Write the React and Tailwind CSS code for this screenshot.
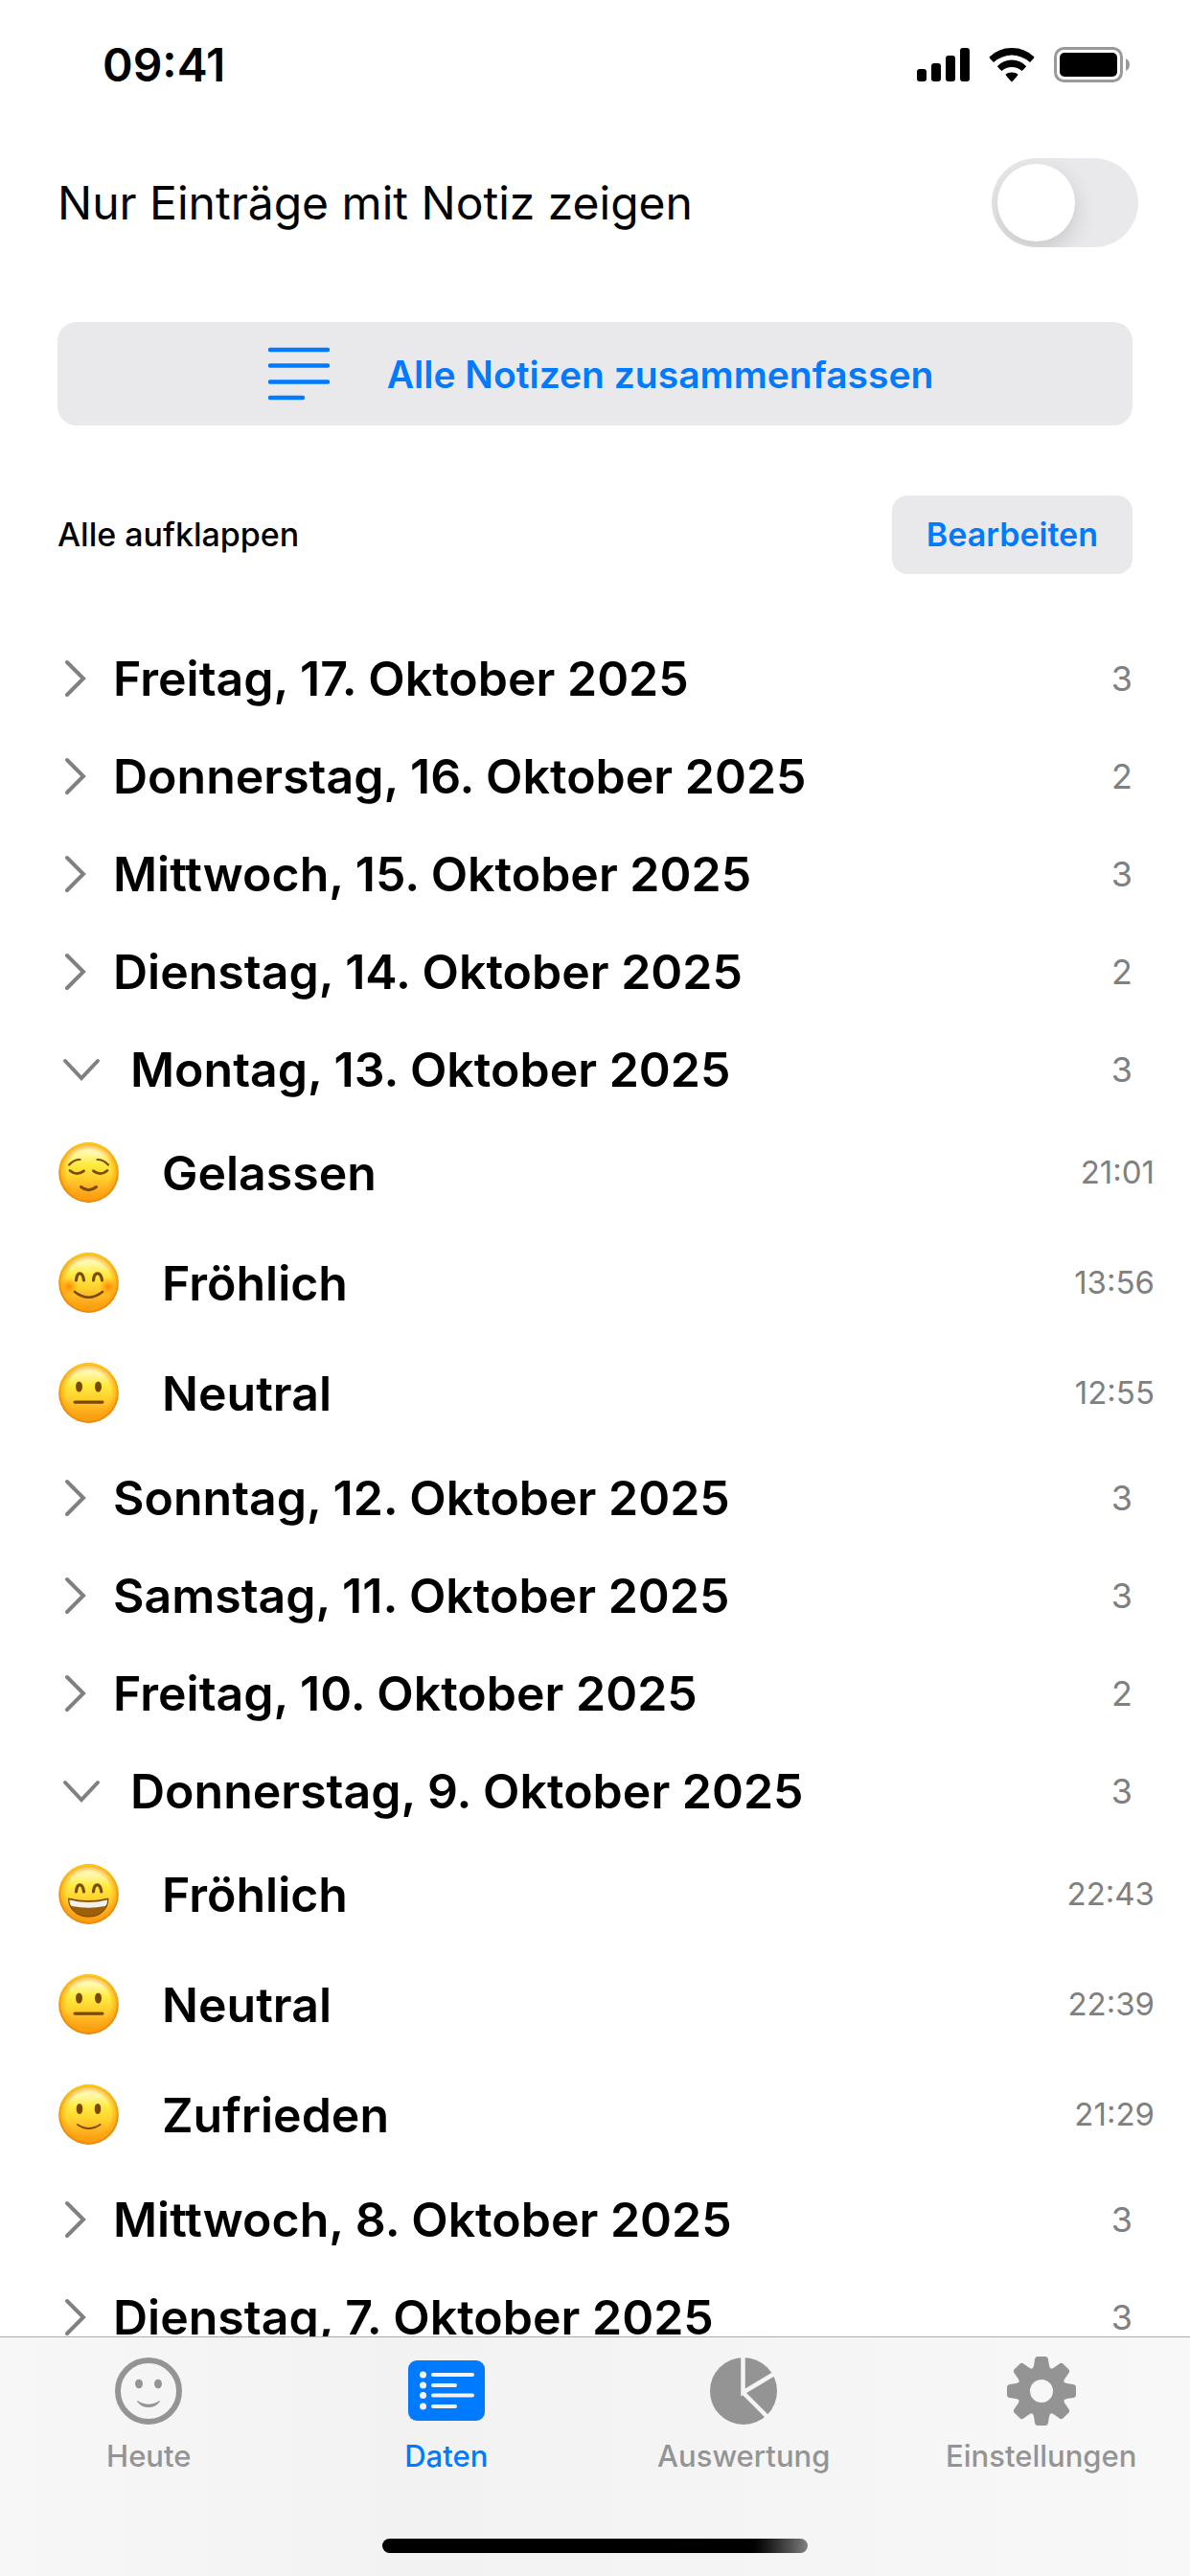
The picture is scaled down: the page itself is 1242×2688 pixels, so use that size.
/**
 * Mood journal, "Daten" tab.
 *
 * Shows all recorded days as collapsible groups. An opened day lists its
 * mood entries with their time. The tab bar stays fixed at the bottom while
 * the list scrolls behind it.
 */

import { useState } from 'react';

const INITIAL_DAYS = [
  { label: 'Freitag, 17. Oktober 2025', count: 3 },
  { label: 'Donnerstag, 16. Oktober 2025', count: 2 },
  { label: 'Mittwoch, 15. Oktober 2025', count: 3 },
  { label: 'Dienstag, 14. Oktober 2025', count: 2 },
  {
    label: 'Montag, 13. Oktober 2025',
    count: 3,
    open: true,
    entries: [
      { mood: 'relieved', name: 'Gelassen', time: '21:01' },
      { mood: 'blush', name: 'Fröhlich', time: '13:56' },
      { mood: 'neutral', name: 'Neutral', time: '12:55' },
    ],
  },
  { label: 'Sonntag, 12. Oktober 2025', count: 3 },
  { label: 'Samstag, 11. Oktober 2025', count: 3 },
  { label: 'Freitag, 10. Oktober 2025', count: 2 },
  {
    label: 'Donnerstag, 9. Oktober 2025',
    count: 3,
    open: true,
    entries: [
      { mood: 'grin', name: 'Fröhlich', time: '22:43' },
      { mood: 'neutral', name: 'Neutral', time: '22:39' },
      { mood: 'smile', name: 'Zufrieden', time: '21:29' },
    ],
  },
  { label: 'Mittwoch, 8. Oktober 2025', count: 3 },
  { label: 'Dienstag, 7. Oktober 2025', count: 3 },
];

// Facial features, drawn on top of the shared yellow face (63x63)
const FEATURES = {
  relieved: (
    <g fill="none" stroke="#7a4a05" strokeLinecap="round">
      <path d="M11 23.500Q16 18 22.500 18M40.500 18Q47 18 52 23.500" strokeWidth="2.200" />
      <path d="M12 29.500Q19 35.500 26.500 29.800M36.500 29.800Q44 35.500 51 29.500" strokeWidth="2.800" />
      <path d="M23.500 46.500Q31.500 53 39.500 46.500" strokeWidth="3" />
    </g>
  ),
  blush: (
    <g>
      <circle cx="11" cy="35.500" r="10" fill="url(#cheek)" />
      <circle cx="52" cy="35.500" r="10" fill="url(#cheek)" />
      <g fill="none" stroke="#7a4a05" strokeLinecap="round">
        <path d="M18.500 29Q19 21.800 22.300 21.800T26.500 29M36.500 29Q37 21.800 40.800 21.800T45.500 29" strokeWidth="3.200" />
        <path d="M17 41Q31.500 52.500 46 41" strokeWidth="2.600" />
      </g>
    </g>
  ),
  neutral: (
    <g fill="#7a4a05">
      <ellipse cx="21.500" cy="25" rx="3.500" ry="5.500" />
      <ellipse cx="41.500" cy="25" rx="3.500" ry="5.500" />
      <rect x="15.500" y="39.500" width="32" height="3.200" rx="1.600" />
    </g>
  ),
  grin: (
    <g>
      <path
        d="M18.500 29Q19 21.800 22.300 21.800T26.500 29M36.500 29Q37 21.800 40.500 21.800T44.800 29"
        fill="none"
        stroke="#7a4a05"
        strokeWidth="3.200"
        strokeLinecap="round"
      />
      <path d="M10.500 36Q31.500 41.500 52 36C52 48 43 55 31.500 55S10.500 48 10.500 36Z" fill="#9c6007" stroke="#704204" />
      <path d="M11.500 37.500Q31.500 42.500 51 37.500Q51 43 48.500 44Q31.500 47.500 14 44Q11.500 43 11.500 37.500Z" fill="#f1f1f1" />
    </g>
  ),
  smile: (
    <g fill="#7a4a05">
      <ellipse cx="22" cy="25.500" rx="3.300" ry="5.500" />
      <ellipse cx="41" cy="25.500" rx="3.300" ry="5.500" />
      <path d="M20 42Q31.500 50 43.500 42" fill="none" stroke="#7a4a05" strokeWidth="2" strokeLinecap="round" />
    </g>
  ),
};

/** Gradients shared by all mood faces. */
const MoodGradients = () => (
  <svg className="absolute size-0" aria-hidden="true">
    <defs>
      <linearGradient id="face" x1="0" y1="0" x2="0" y2="1">
        <stop offset="0" stopColor="#fffbd2" />
        <stop offset="0.180" stopColor="#fff8a8" />
        <stop offset="0.360" stopColor="#ffec40" />
        <stop offset="0.580" stopColor="#ffd22e" />
        <stop offset="0.780" stopColor="#ffb01e" />
        <stop offset="1" stopColor="#f7940c" />
      </linearGradient>
      <radialGradient id="rim">
        <stop offset="0.740" stopColor="#ff9d0a" stopOpacity="0" />
        <stop offset="0.900" stopColor="#ffa30f" stopOpacity="0.600" />
        <stop offset="1" stopColor="#e07c08" />
      </radialGradient>
      <linearGradient id="gloss" x1="0" y1="0" x2="0" y2="1">
        <stop offset="0" stopColor="#ffce00" />
        <stop offset="0.600" stopColor="#ffce00" stopOpacity="0" />
      </linearGradient>
      <radialGradient id="cheek">
        <stop offset="0" stopColor="#ff7a00" stopOpacity="0.850" />
        <stop offset="1" stopColor="#ff9500" stopOpacity="0" />
      </radialGradient>
    </defs>
  </svg>
);

const MoodFace = ({ mood }) => (
  <svg viewBox="0 0 63 63" className="size-[63px] shrink-0" aria-hidden="true">
    <circle cx="31.500" cy="31.500" r="31.200" fill="url(#face)" />
    <circle cx="31.500" cy="31.500" r="31.200" fill="url(#rim)" />
    <circle cx="31.500" cy="31.500" r="30.400" fill="none" stroke="url(#gloss)" strokeWidth="1.600" />
    {FEATURES[mood]}
  </svg>
);

const Chevron = ({ open }) =>
  open ? (
    <svg viewBox="0 0 40 24" className="mr-[31px] ml-[5px] h-6 w-10 shrink-0" aria-hidden="true">
      <path d="M3 3L20 21L37 3" fill="none" stroke="#808080" strokeWidth="4" strokeLinecap="round" />
    </svg>
  ) : (
    <svg viewBox="0 0 24 40" className="mr-[27px] ml-[7px] h-10 w-6 shrink-0" aria-hidden="true">
      <path d="M3 3L20 20L3 37" fill="none" stroke="#808080" strokeWidth="4" strokeLinecap="round" />
    </svg>
  );

const StatusBar = () => (
  <div className="flex h-[136px] items-center justify-between pr-[63px] pl-[107px]">
    <span className="text-[48px] leading-none font-semibold">09:41</span>
    <div className="flex items-center gap-[20px]">
      <svg viewBox="0 0 55 36" className="h-9 w-[55px]" aria-hidden="true">
        <rect x="0" y="22" width="10" height="13" rx="3" />
        <rect x="15" y="16" width="10" height="19" rx="3" />
        <rect x="30" y="8" width="10" height="27" rx="3" />
        <rect x="45" y="0" width="10" height="35" rx="3" />
      </svg>
      <svg viewBox="0 0 48 36" className="h-9 w-12" aria-hidden="true">
        <path d="M0.500 9.500Q10 0 24 0T47.500 9.500Q47.500 10.500 43 15Q34 7.500 24 7.500T5 15Q0.500 10.500 0.500 9.500Z" />
        <path d="M9 19Q15 12.500 24 12.500T39 19Q39 20 34.500 24Q30 20 24 20T13.500 24Q9 20 9 19Z" />
        <path d="M17.500 27.500Q20 25.500 24 25.500T30.500 27.500Q30.500 29 24 35.500Q17.500 29 17.500 27.500Z" />
      </svg>
      <svg viewBox="0 0 79 38" className="h-[38px] w-[79px]" aria-hidden="true">
        <rect x="1.500" y="1.500" width="69" height="34" rx="9" fill="none" stroke="#999" strokeWidth="3" />
        <rect x="6" y="6" width="60" height="25" rx="5" />
        <path d="M75 12Q79 14 79 18.500T75 25Z" fill="#999" />
      </svg>
    </div>
  </div>
);

const DayGroup = ({ day, onToggle }) => (
  <section>
    <button
      type="button"
      aria-expanded={Boolean(day.open)}
      onClick={onToggle}
      className="flex h-[102px] w-full items-center px-[60px] text-left"
    >
      <Chevron open={day.open} />
      <span className="grow text-[50px] leading-none font-semibold">{day.label}</span>
      <span className="text-[36px] leading-none text-[#808080]">{day.count}</span>
    </button>

    {day.open && day.entries && (
      <ul>
        {day.entries.map((entry) => (
          <li key={entry.time} className="flex h-[115px] items-center pr-[37px] pb-[2px] pl-[61px]">
            <MoodFace mood={entry.mood} />
            <span className="ml-[45px] grow text-[50px] leading-none font-semibold">{entry.name}</span>
            <time className="text-[33px] leading-none text-[#808080]">{entry.time}</time>
          </li>
        ))}
      </ul>
    )}
  </section>
);

const TodayIcon = () => (
  <svg viewBox="0 0 72 72" className="size-[72px]" fill="currentColor" aria-hidden="true">
    <circle cx="36" cy="36" r="32" fill="none" stroke="currentColor" strokeWidth="6" />
    <ellipse cx="26" cy="28.500" rx="4" ry="4.800" />
    <ellipse cx="46" cy="28.500" rx="4" ry="4.800" />
    <path d="M24.500 46Q36 53.500 47.500 46Q48.500 46 47.500 47.500Q43 53 36 53T24.500 47.500Q23.500 46 24.500 46Z" />
  </svg>
);

const DataIcon = () => (
  <svg viewBox="0 0 80 72" className="h-[72px] w-[80px]" aria-hidden="true">
    <rect x="0" y="4" width="80" height="63" rx="9" fill="currentColor" />
    <g fill="#f3f3f3">
      <circle cx="15.500" cy="19" r="3.500" />
      <circle cx="15.500" cy="30" r="3.500" />
      <circle cx="15.500" cy="40.500" r="3.500" />
      <circle cx="15.500" cy="52" r="3.500" />
      <rect x="24" y="17" width="45" height="4" rx="2" />
      <rect x="24" y="28" width="27" height="4" rx="2" />
      <rect x="24" y="38.500" width="45" height="4" rx="2" />
      <rect x="24" y="50" width="27" height="4" rx="2" />
    </g>
  </svg>
);

const ChartIcon = () => (
  <svg viewBox="0 0 72 72" className="size-[72px]" aria-hidden="true">
    <mask id="slices">
      <rect width="72" height="72" fill="#fff" />
      <path d="M35.500 0V37.500L68 18M35.500 37.500L62 64" fill="none" stroke="#000" strokeWidth="4.500" />
    </mask>
    <circle cx="36" cy="36" r="35" fill="currentColor" mask="url(#slices)" />
  </svg>
);

const GearIcon = () => (
  <svg viewBox="0 0 72 72" className="size-[72px]" aria-hidden="true">
    <circle cx="36" cy="36" r="18.500" fill="none" stroke="currentColor" strokeWidth="13" />
    {[0, 45, 90, 135, 180, 225, 270, 315].map((angle) => (
      <path
        key={angle}
        d="M25 14Q27.500 12.500 28 9.500L29 3Q29.500 0 32 0H40Q42.500 0 43 3L44 9.500Q44.500 12.500 47 14L43 19H29Z"
        transform={`rotate(${angle} 36 36)`}
        fill="currentColor"
      />
    ))}
  </svg>
);

const TABS = [
  { label: 'Heute', Icon: TodayIcon },
  { label: 'Daten', Icon: DataIcon },
  { label: 'Auswertung', Icon: ChartIcon },
  { label: 'Einstellungen', Icon: GearIcon },
];

const TabBar = ({ active, onSelect }) => (
  <footer className="shrink-0 border-t border-[#adadad] bg-linear-to-r from-[#f6f7f6] via-[#f2f2f2] via-35% to-[#f8f8f8]">
    <nav className="grid grid-cols-4">
      {TABS.map(({ label, Icon }) => (
        <button
          key={label}
          type="button"
          onClick={() => onSelect(label)}
          className={`flex flex-col items-center gap-[14px] pt-[20px] ${
            active === label ? 'text-[#007aff]' : 'text-[#949494]'
          }`}
        >
          <Icon />
          <span className="text-[31px] leading-[36px] font-medium">{label}</span>
        </button>
      ))}
    </nav>
    {/* Home indicator */}
    <div className="mx-auto mt-[68px] mb-[24px] h-[15px] w-[444px] rounded-full bg-linear-to-r from-black from-85% to-[#808080]" />
  </footer>
);

const App = () => {
  const [days, setDays] = useState(INITIAL_DAYS);
  const [onlyNotes, setOnlyNotes] = useState(false);
  const [activeTab, setActiveTab] = useState('Daten');

  const toggleDay = (label) => {
    setDays(days.map((day) => (day.label === label ? { ...day, open: !day.open } : day)));
  };

  const expandAll = () => {
    setDays(days.map((day) => ({ ...day, open: true })));
  };

  return (
    <div className="flex h-screen flex-col bg-white font-['Inter',sans-serif] text-black">
      <MoodGradients />
      <StatusBar />

      <main className="min-h-0 flex-1 overflow-y-auto pt-[29px] [scrollbar-width:none]">
        {/* Filter switch */}
        <div className="flex items-center justify-between pr-[54px] pl-[60px]">
          <label htmlFor="only-notes" className="text-[48px] leading-none">
            Nur Einträge mit Notiz zeigen
          </label>
          <input
            id="only-notes"
            type="checkbox"
            role="switch"
            checked={onlyNotes}
            onChange={(e) => setOnlyNotes(e.target.checked)}
            className="flex h-[93px] w-[153px] shrink-0 appearance-none overflow-hidden rounded-full bg-[#e9e9eb] p-[6px] before:size-[81px] before:rounded-full before:bg-white before:shadow-[0_9px_24px_rgba(0,0,0,0.15)] checked:justify-end checked:bg-[#34c759]"
          />
        </div>

        <div className="mt-[78px] px-[60px]">
          <button
            type="button"
            className="flex h-[108px] w-full items-center justify-center gap-[60px] rounded-[20px] bg-[#e9e9eb] pl-[12px] text-[#007aff]"
          >
            <svg viewBox="0 0 64 56" className="h-14 w-16" aria-hidden="true">
              <path
                d="M2 3H62M2 19.500H62M2 36.500H62M2 53H36"
                stroke="currentColor"
                strokeWidth="4.500"
                strokeLinecap="round"
              />
            </svg>
            <span className="text-[39px] leading-none font-semibold">Alle Notizen zusammenfassen</span>
          </button>
        </div>

        <div className="mt-[73px] flex items-center justify-between px-[60px]">
          <button type="button" onClick={expandAll} className="text-[34px] leading-none font-medium">
            Alle aufklappen
          </button>
          <button
            type="button"
            className="h-[82px] rounded-[16px] bg-[#e9e9eb] px-[36px] text-[34px] leading-none font-semibold text-[#007aff]"
          >
            Bearbeiten
          </button>
        </div>

        <div className="mt-[58px]">
          {days.map((day) => (
            <DayGroup key={day.label} day={day} onToggle={() => toggleDay(day.label)} />
          ))}
        </div>
      </main>

      <TabBar active={activeTab} onSelect={setActiveTab} />
    </div>
  );
};

export default App;
